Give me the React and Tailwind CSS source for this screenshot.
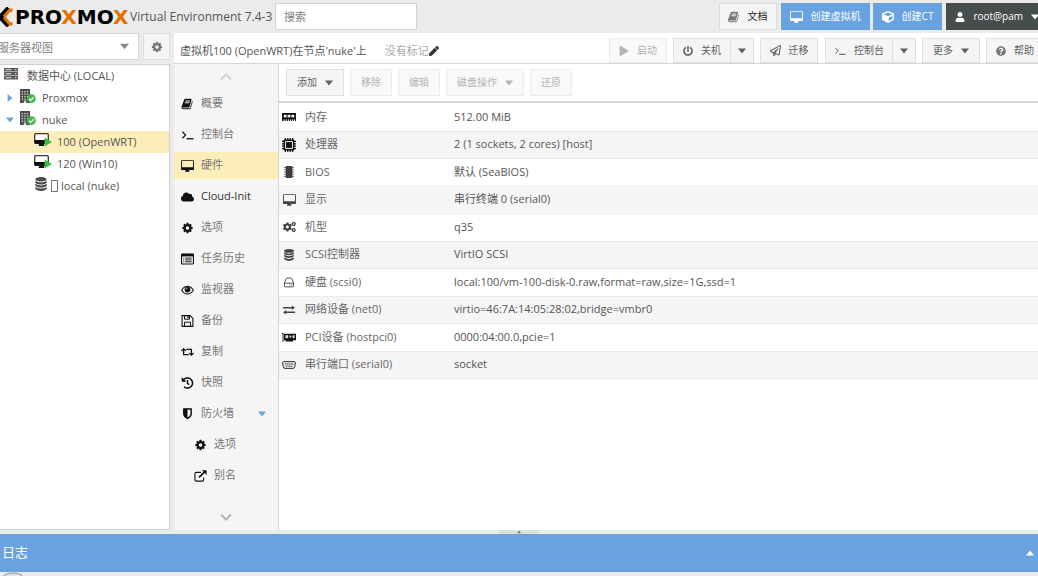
import { useState } from 'react';
import {
    FaCloud, FaCogs, FaCube, FaHistory, FaPen,
    FaPlay, FaPowerOff, FaQuestionCircle, FaRegPaperPlane, FaRetweet, FaUser,
} from 'react-icons/fa';

/* ---------- icons ---------- */

const BookIcon = ({ className }) => (
    <svg viewBox="0 0 1792 1792" fill="currentColor" className={className}>
        <path d="M1639 478q40 57 18 129l-275 906q-19 64-76.5 107.5t-122.5 43.5h-923q-77 0-148.5-53.5t-99.5-131.5q-24-67-2-127 0-4 3-27t4-37q1-8-3-21.5t-3-19.5q2-11 8-21t16.5-23.5 16.5-23.5q23-38 45-91.5t30-91.5q3-10 .5-30t-.5-28q3-11 17-28t17-23q21-36 42-92t25-90q1-9-2.5-32t.5-28q4-13 22-30.5t22-22.5q19-26 42.5-84.5t27.5-96.5q1-8-3-25.5t-2-26.5q2-8 9-18t18-23 17-21q8-12 16.5-30.5t15-35 16-36 19.5-32 26.5-23.5 36-11.5 47.5 5.5l-1 3q38-9 51-9h761q74 0 114 56t18 130l-274 906q-36 119-71.5 153.5t-128.5 34.5h-869q-27 0-38 15-11 16-1 43 24 70 144 70h923q29 0 56-15.5t35-41.5l300-987q7-22 5-57 38 15 59 43zm-1064 2q-4 13 2 22.5t20 9.5h608q13 0 25.5-9.5t16.5-22.5l21-64q4-13-2-22.5t-20-9.5h-608q-13 0-25.5 9.5t-16.5 22.5zm-83 256q-4 13 2 22.5t20 9.5h608q13 0 25.5-9.5t16.5-22.5l21-64q4-13-2-22.5t-20-9.5h-608q-13 0-25.5 9.5t-16.5 22.5z" />
    </svg>
);

const CogIcon = ({ className }) => (
    <svg viewBox="0 0 1792 1792" fill="currentColor" className={className}>
        <path d="M1152 896q0-106-75-181t-181-75-181 75-75 181 75 181 181 75 181-75 75-181zm512-109v222q0 12-8 23t-20 13l-185 28q-19 54-39 91 35 50 107 138 10 12 10 25t-9 23q-27 37-99 108t-94 71q-12 0-26-9l-138-108q-44 23-91 38-16 136-29 186-7 28-36 28h-222q-14 0-24.5-8.5t-11.5-21.5l-28-184q-49-16-90-37l-141 107q-10 9-25 9-14 0-25-11-126-114-165-168-7-10-7-23 0-12 8-23 15-21 51-66.5t54-70.5q-27-50-41-99l-183-27q-13-2-21-12.5t-8-23.5v-222q0-12 8-23t19-13l186-28q14-46 39-92-40-57-107-138-10-12-10-24 0-10 9-23 26-36 98.5-107.5t94.5-71.5q13 0 26 10l138 107q44-23 91-38 16-136 29-186 7-28 36-28h222q14 0 24.5 8.5t11.5 21.5l28 184q49 16 90 37l142-107q9-9 24-9 13 0 25 10 129 119 165 170 7 8 7 22 0 12-8 23-15 21-51 66.5t-54 70.5q26 50 41 98l183 28q13 2 21 12.5t8 23.5z" />
    </svg>
);

const DesktopIcon = ({ className }) => (
    <svg viewBox="0 0 1856 1664" fill="currentColor" className={className}>
        <path d="M1728 992v-832q0-13-9.5-22.5t-22.5-9.5h-1536q-13 0-22.5 9.5t-9.5 22.5v832q0 13 9.5 22.5t22.5 9.5h1536q13 0 22.5-9.5t9.5-22.5zm128-832v1088q0 66-47 113t-113 47h-544q0 37 16 77.5t32 71 16 43.5q0 26-19 45t-45 19h-512q-26 0-45-19t-19-45q0-14 16-44t32-70 16-78h-480q-66 0-113-47t-47-113v-1088q0-66 47-113t113-47h1536q66 0 113 47t47 113z" />
    </svg>
);

const TerminalIcon = ({ className }) => (
    <svg viewBox="0 0 14 12" fill="none" stroke="currentColor" className={className}>
        <path d="M1.5 2.5 5 6 1.5 9.5" strokeWidth="1.2" />
        <path d="M6 10h7.5" strokeWidth="1.4" />
    </svg>
);

const ListIcon = ({ className }) => (
    <svg viewBox="0 0 14 12" className={className}>
        <rect x="0.6" y="0.6" width="12.8" height="10.8" rx="1" fill="none" stroke="currentColor" strokeWidth="1.2" />
        <path d="M.5.5h13v2.7H.5z" fill="currentColor" />
        <path d="M2.5 5h1M2.500 7h1M2.500 9h1M4.500 5h7M4.500 7h7M4.500 9h7" stroke="currentColor" />
    </svg>
);

const EyeIcon = ({ className }) => (
    <svg viewBox="0 0 14 12" className={className}>
        <path d="M.7 6.200Q3.300 2 7 2t6.300 4.200Q10.700 10.300 7 10.300T.7 6.200z" fill="none" stroke="currentColor" strokeWidth="1.1" />
        <circle cx="7" cy="5.500" r="3.100" fill="currentColor" />
        <path d="M5.200 5.500Q5.300 3.900 7 3.800" fill="none" stroke="#f5f5f5" strokeWidth="0.8" />
    </svg>
);

const SaveIcon = ({ className }) => (
    <svg viewBox="0 0 12 12" fill="none" stroke="currentColor" className={className}>
        <path d="M.6.6h8l2.800 2.800v8H.6z" strokeWidth="1.100" />
        <path d="M3 11V7.200h6V11" />
        <path d="M3 .8v3.400h5V.8" />
        <path d="M6.600 1v2.300" strokeWidth="1.300" />
    </svg>
);

const ShieldIcon = ({ className }) => (
    <svg viewBox="0 0 12 14" className={className}>
        <path d="M1.700 1.200h8.600v5.600q0 3.200-4.300 5.400-4.300-2.200-4.300-5.400z" fill="none" stroke="currentColor" strokeWidth="1.700" />
        <path d="M1.500 1H6v11q-4.500-2-4.500-5.200z" fill="currentColor" />
    </svg>
);

const LinkOutIcon = ({ className }) => (
    <svg viewBox="0 0 14 13" fill="none" stroke="currentColor" className={className}>
        <path d="M7.500 2.600H2.400Q1 2.600 1 4v6.600Q1 12 2.400 12H9q1.400 0 1.400-1.400V8" strokeWidth="1.200" />
        <path d="M5.400 8 11.500 2" strokeWidth="1.800" />
        <path d="M8.600.3h5v5z" fill="currentColor" stroke="none" />
    </svg>
);

const ServerIcon = ({ className }) => (
    <svg viewBox="0 0 14 12" className={className}>
        {[0, 4, 8].map(y => (
            <g key={y}>
                <rect x="0" y={y} width="14" height="3.4" rx="0.5" fill="#5a5555" />
                <rect x="1.5" y={y + 1.2} width="6" height="1" fill="#e0e0e0" />
                <rect x="11" y={y + 1.2} width="1.4" height="1" fill="#fff" />
            </g>
        ))}
    </svg>
);

const NodeIcon = ({ className }) => (
    <svg viewBox="0 0 17 15" className={className}>
        <rect x="1" y="0" width="10" height="14" fill="#4a4a4a" />
        {[2, 4.5, 7, 9.5].map(y => [2.6, 5.2, 7.8].map(x => (
            <rect key={x + '-' + y} x={x} y={y} width="1.4" height="1.3" fill="#d5d5d5" />
        )))}
        <rect x="4.8" y="11.6" width="2.4" height="2.4" fill="#ddd" />
        <circle cx="12.4" cy="9.6" r="4.4" fill="#3dbb46" />
        <path d="M10.2 9.7 11.9 11.3 14.8 8.2" fill="none" stroke="#fff" strokeWidth="1.4" />
    </svg>
);

const VmIcon = ({ className }) => (
    <svg viewBox="0 0 18 14" className={className}>
        <rect x="0.7" y="0.7" width="13.6" height="9.6" rx="1" fill="#fff" stroke="#43303a" strokeWidth="1.3" />
        <path d="M0.5 7h14v2.7q0 1-1 1h-12q-1 0-1-1z" fill="#111" />
        <path d="M5.4 10h4.2l.9 3h-6z" fill="#111" />
        <path d="M10.6 4.6 18 9l-7.4 4.4z" fill="#3dbb46" />
    </svg>
);

const DatabaseIcon = ({ className }) => (
    <svg viewBox="0 0 12 14" fill="currentColor" className={className}>
        <ellipse cx="6" cy="2.2" rx="5.7" ry="2.2" />
        <path d="M.3 3.7q2.2 1.7 5.7 1.7t5.7-1.7v1.700q-1.200 2-5.700 2t-5.700-2z" />
        <path d="M.3 6.800q2.200 1.700 5.700 1.700t5.700-1.700v1.700q-1.200 2-5.700 2t-5.700-2z" />
        <path d="M.3 9.900q2.200 1.700 5.700 1.700t5.700-1.700v1.900q-1.200 2.100-5.700 2.100t-5.700-2.100z" />
    </svg>
);

const MemoryIcon = ({ className }) => (
    <svg viewBox="0 0 14 8" className={className}>
        <path d="M0 0h14v2.4q-.8.4 0 1.2V8H0V3.6q.8-.8 0-1.2z" fill="#111" />
        {[1.8, 5.6, 9.4].map(x => <rect key={x} x={x} y="1.8" width="2.8" height="2.6" fill="#eee" />)}
        {[1.5, 3.7, 5.9, 8.1, 10.3, 12].map(x => <rect key={x} x={x} y="6.4" width="1" height="1.6" fill="#fff" />)}
    </svg>
);

const CpuIcon = ({ className }) => (
    <svg viewBox="0 0 14 14" className={className}>
        <path d="M3.3 0v14M5.8 0v14M8.2 0v14M10.7 0v14M0 3.3h14M0 5.8h14M0 8.2h14M0 10.7h14" stroke="#111" strokeWidth="1.2" />
        <rect x="1.6" y="1.6" width="10.8" height="10.8" rx="1" fill="#111" />
        <rect x="3.6" y="3.6" width="6.8" height="6.8" fill="none" stroke="#fff" strokeWidth="0.9" />
    </svg>
);

const ChipIcon = ({ className }) => (
    <svg viewBox="0 0 12 14" className={className}>
        <path d="M1 2.5h10M1 4.7h10M1 7h10M1 9.3h10M1 11.5h10" stroke="#888" strokeWidth="1" />
        <rect x="2.6" y="1" width="6.8" height="12" rx="0.8" fill="#443c3c" />
    </svg>
);

const HddIcon = ({ className }) => (
    <svg viewBox="0 0 12 12" fill="none" stroke="currentColor" className={className}>
        <path d="M1 6.5 2.9 1.8q.2-.6.8-.6h4.6q.6 0 .8.6L11 6.5V10q0 .8-.8.8H1.8Q1 10.8 1 10zM1 6.7h10" />
        <path d="M6.5 8.8h1M8.8 8.8h1" strokeWidth="1.2" />
    </svg>
);

const ExchangeIcon = ({ className }) => (
    <svg viewBox="0 0 13 10" fill="currentColor" className={className}>
        <path d="M0 1.800h9.500V0L13 2.500 9.500 5V3.300H0z" />
        <path d="M13 8.200H3.500V10L0 7.500 3.500 5v1.700H13z" />
    </svg>
);

const PciIcon = ({ className }) => (
    <svg viewBox="0 0 14 9" className={className}>
        <path d="M0 0h1.5v9H.6V1H0z" fill="#111" />
        <path d="M2 .8h12v6.4H11v1.3H3.6V7.2H2z" fill="#111" />
        <rect x="3.4" y="2.2" width="2.8" height="3" fill="#ddd" />
        <circle cx="8.4" cy="3.6" r="1.1" fill="#ddd" />
        <rect x="10.6" y="2.2" width="2" height="3" fill="#ddd" />
    </svg>
);

const SerialIcon = ({ className }) => (
    <svg viewBox="0 0 14 8" className={className}>
        <path d="M1.8.6h10.4q1.3 0 1.2 1.3l-.6 3.8q-.3 1.700-1.800 1.700H3Q1.500 7.400 1.200 5.700L.6 1.900Q.5.6 1.800.6z" fill="#e8e8e8" stroke="#333" />
        <path d="M3 2.900h8.500" stroke="#333" strokeWidth="1.4" strokeDasharray="1 .8" />
        <path d="M3.800 5.200h6.800" stroke="#333" strokeWidth="1.3" strokeDasharray="1 .8" />
    </svg>
);

const LogoMark = ({ className }) => (
    <svg viewBox="0 0 14 20" fill="none" className={className}>
        <path d="M12.500 3.200H9.600L3.600 10l6 6.800h2.900" stroke="#e57000" strokeWidth="3.200" />
        <path d="M8 .5 0 9.500M8 19.500 0 10.500" stroke="#000" strokeWidth="3.200" />
        <path d="M-2 6 2 10l-4 4" stroke="#000" strokeWidth="3" />
    </svg>
);

const Chevron = ({ up }) => (
    <svg viewBox="0 0 12 7" fill="none" stroke={up ? '#d2d2d2' : '#b4b4b4'} strokeWidth="2" className="w-3 h-2">
        <path d={up ? 'M1 6 6 1l5 5' : 'M1 1l5 5 5-5'} />
    </svg>
);

const Arrow = ({ dir = 'down', className }) => {
    const paths = { down: 'M0 2h10L5 8z', right: 'M2 0v10l6-5z', up: 'M0 8h10L5 2z' };
    return (
        <svg viewBox="0 0 10 10" fill="currentColor" className={className}>
            <path d={paths[dir]} />
        </svg>
    );
};

/* ---------- data ---------- */

const navItems = [
    { id: 'summary', label: '概要', icon: BookIcon },
    { id: 'console', label: '控制台', icon: TerminalIcon },
    { id: 'hardware', label: '硬件', icon: DesktopIcon },
    { id: 'cloudinit', label: 'Cloud-Init', icon: FaCloud },
    { id: 'options', label: '选项', icon: CogIcon },
    { id: 'tasks', label: '任务历史', icon: ListIcon },
    { id: 'monitor', label: '监视器', icon: EyeIcon },
    { id: 'backup', label: '备份', icon: SaveIcon },
    { id: 'replication', label: '复制', icon: FaRetweet },
    { id: 'snapshot', label: '快照', icon: FaHistory },
    { id: 'firewall', label: '防火墙', icon: ShieldIcon, expandable: true },
    { id: 'fw-options', label: '选项', icon: CogIcon, nested: true },
    { id: 'fw-alias', label: '别名', icon: LinkOutIcon, nested: true },
];

const hardware = [
    { name: '内存', value: '512.00 MiB', icon: MemoryIcon, size: 'w-[14px] h-2' },
    { name: '处理器', value: '2 (1 sockets, 2 cores) [host]', icon: CpuIcon, size: 'w-[14px] h-[14px]' },
    { name: 'BIOS', value: '默认 (SeaBIOS)', icon: ChipIcon, size: 'w-3 h-[14px]' },
    { name: '显示', value: '串行终端 0 (serial0)', icon: DesktopIcon, size: 'w-[13px] h-3' },
    { name: '机型', value: 'q35', icon: FaCogs, size: 'w-[13px] h-3' },
    { name: 'SCSI控制器', value: 'VirtIO SCSI', icon: DatabaseIcon, size: 'w-3 h-3' },
    { name: '硬盘 (scsi0)', value: 'local:100/vm-100-disk-0.raw,format=raw,size=1G,ssd=1', icon: HddIcon, size: 'w-3 h-[11px]' },
    { name: '网络设备 (net0)', value: 'virtio=46:7A:14:05:28:02,bridge=vmbr0', icon: ExchangeIcon, size: 'w-3 h-[10px]' },
    { name: 'PCI设备 (hostpci0)', value: '0000:04:00.0,pcie=1', icon: PciIcon, size: 'w-[14px] h-[9px]' },
    { name: '串行端口 (serial0)', value: 'socket', icon: SerialIcon, size: 'w-[14px] h-2' },
];

/* ---------- parts ---------- */

const toolButton = 'flex items-center justify-center border border-[#e0e0e0] bg-[#f5f5f5] text-[10px] text-[#606060] whitespace-nowrap shrink-0 disabled:text-[#b4b4b4] disabled:border-[#ececec] disabled:bg-[#f9f9f9]';

const Header = () => (
    <header className="flex items-center h-[33px] shrink-0">
        <h1 className="flex items-center shrink-0 w-[275px]">
            <LogoMark className="w-[14px] h-5 shrink-0" />
            <span className="w-[116px] pl-px text-[20px] leading-5 font-bold text-black font-['DejaVu_Sans',sans-serif]">
                PRO<span className="text-[#e57000]">X</span>MO<span className="text-[#e57000]">X</span>
            </span>
            <span className="text-xs text-[#555] whitespace-nowrap">Virtual Environment 7.4-3</span>
        </h1>
        <input type="text" aria-label="搜索" placeholder="搜索" className="w-[142px] h-[27px] px-2 border border-[#d5d5d5] bg-white text-[11px] placeholder:text-[#808080] outline-none" />
        <div className="flex ml-auto -mr-[10px] h-[27px]">
            <button type="button" className="flex items-center gap-2 px-2 mr-1 border border-[#dcdcdc] bg-[#f5f5f5] text-[10px] text-[#222] whitespace-nowrap">
                <BookIcon className="w-3 h-3 text-[#777]" />文档
            </button>
            <button type="button" className="flex items-center gap-2 px-[9px] mr-[3px] bg-[#68a2e0] text-[10px] text-white whitespace-nowrap">
                <DesktopIcon className="w-[13px] h-3" />创建虚拟机
            </button>
            <button type="button" className="flex items-center gap-2 px-[9px] mr-1 bg-[#68a2e0] text-[10px] text-white whitespace-nowrap">
                <FaCube className="w-3 h-3" />创建CT
            </button>
            <button type="button" className="flex items-center gap-2 px-[9px] bg-[#464d4d] text-[10px] text-white whitespace-nowrap">
                <FaUser className="w-[10px] h-[10px]" />root@pam<Arrow className="w-2 h-2" />
            </button>
        </div>
    </header>
);

const treeRow = 'flex items-center h-[22px] text-[11px] text-[#555] whitespace-nowrap';

const ResourceTree = () => (
    <aside className="flex flex-col w-[170px] shrink-0">
        <div className="flex justify-between h-[27px] mb-1">
            <div className="relative w-[139px] overflow-hidden border border-l-0 border-[#d5d5d5] bg-white">
                <select aria-label="视图" className="appearance-none w-full h-full -ml-[2px] text-[11px] text-[#808080] outline-none">
                    <option>服务器视图</option>
                </select>
                <Arrow className="absolute right-[9px] top-2 w-[9px] h-[9px] text-[#8a8a8a] pointer-events-none" />
            </div>
            <button type="button" aria-label="设置" className="flex items-center justify-center w-[27px] border border-[#e0e0e0] bg-[#f5f5f5] text-[#777]">
                <CogIcon className="w-3 h-3" />
            </button>
        </div>
        <ul className="flex-1 min-h-0 border border-l-0 border-[#d0d0d0] bg-white">
            <li className={treeRow}>
                <ServerIcon className="w-[14px] h-3 ml-1 mr-[9px] mb-1" />数据中心 (LOCAL)
            </li>
            <li className={treeRow}>
                <Arrow dir="right" className="w-2 h-2 ml-[6px] mr-[5px] text-[#68a2e0]" />
                <NodeIcon className="w-[17px] h-[15px] mb-1 mr-[6px]" />Proxmox
            </li>
            <li className={treeRow}>
                <Arrow className="w-2 h-2 ml-[6px] mr-[5px] text-[#68a2e0]" />
                <NodeIcon className="w-[17px] h-[15px] mb-1 mr-[6px]" />nuke
            </li>
            <li className={treeRow + ' bg-[#fceeb8]'}>
                <VmIcon className="w-[18px] h-[14px] ml-[34px] mr-[5px] mb-1" />100 (OpenWRT)
            </li>
            <li className={treeRow}>
                <VmIcon className="w-[18px] h-[14px] ml-[34px] mr-[5px] mb-1" />120 (Win10)
            </li>
            <li className={treeRow}>
                <DatabaseIcon className="w-3 h-[14px] ml-[35px] mr-1 mb-1 text-[#4a4a4a]" />
                <span className="w-[7px] h-3 mr-[3px] border border-[#777]" />local (nuke)
            </li>
        </ul>
    </aside>
);

const PanelHeader = () => (
    <div className="flex items-end h-[31px] shrink-0 bg-white border-b border-[#d5d5d5] overflow-hidden">
        <h2 className="self-center pl-[6px] pt-[6px] text-[11px] text-[#555] whitespace-nowrap">虚拟机100 (OpenWRT)在节点'nuke'上</h2>
        <div className="self-center flex items-center pl-[18px] pt-[6px] text-[11px] text-[#a8a8a8] whitespace-nowrap">
            没有标记
            <button type="button" aria-label="编辑标记" className="text-[#333]"><FaPen className="w-[10px] h-[10px]" /></button>
        </div>
        <div className="flex ml-auto -mr-[6px] h-[25px]">
            <button type="button" disabled className={toolButton + ' w-[58px] gap-2 mr-[6px]'}><FaPlay className="w-[10px] h-[10px]" />启动</button>
            <button type="button" className={toolButton + ' w-[58px] gap-2'}><FaPowerOff className="w-[10px] h-[10px]" />关机</button>
            <button type="button" aria-label="关机选项" className={toolButton + ' w-6 mr-[6px] -ml-px'}><Arrow className="w-2 h-2" /></button>
            <button type="button" className={toolButton + ' w-[58px] gap-2 mr-[7px]'}><FaRegPaperPlane className="w-[11px] h-[11px]" />迁移</button>
            <button type="button" className={toolButton + ' w-[68px] gap-2'}><TerminalIcon className="w-3 h-[10px]" />控制台</button>
            <button type="button" aria-label="控制台选项" className={toolButton + ' w-6 mr-[6px] -ml-px'}><Arrow className="w-2 h-2" /></button>
            <button type="button" className={toolButton + ' w-[58px] gap-2 mr-[6px]'}>更多<Arrow className="w-2 h-2" /></button>
            <button type="button" className={toolButton + ' w-[58px] gap-2'}><FaQuestionCircle className="w-[10px] h-[10px] text-[#777]" />帮助</button>
        </div>
    </div>
);

const SideNav = ({ active, onSelect }) => (
    <nav className="flex flex-col w-[105px] shrink-0 bg-[#f5f5f5] border-r border-[#d5d5d5]">
        <button type="button" aria-label="向上滚动" className="flex items-center justify-center h-[26px] shrink-0"><Chevron up /></button>
        <ul className="flex flex-col gap-1">
            {navItems.map(item => {
                const Icon = item.icon;
                const on = item.id === active;
                return (
                    <li key={item.id}>
                        <a
                            href={'#' + item.id}
                            onClick={() => onSelect(item.id)}
                            className={`flex items-center gap-[7px] h-[27px] pr-3 text-[11px] whitespace-nowrap ${item.nested ? 'pl-5' : 'pl-[7px]'} ${on ? 'bg-[#fceeb8]' : ''} ${item.id === 'cloudinit' ? 'text-[#333]' : 'text-[#777]'}`}
                        >
                            <Icon className="w-[13px] h-3 shrink-0 text-[#111]" />
                            {item.label}
                            {item.expandable && <Arrow className="w-2 h-2 ml-auto text-[#68a2e0]" />}
                        </a>
                    </li>
                );
            })}
        </ul>
        <button type="button" aria-label="向下滚动" className="flex items-center justify-center h-[26px] shrink-0 mt-auto"><Chevron /></button>
    </nav>
);

const HardwareView = () => (
    <section className="flex-1 min-w-0 bg-white">
        <div className="flex items-center gap-[6px] h-[39px] pl-[7px] border-b-2 border-[#d5d5d5]">
            <button type="button" className={toolButton + ' h-[27px] px-[10px] gap-2'}>添加<Arrow className="w-2 h-2" /></button>
            <button type="button" disabled className={toolButton + ' h-[27px] px-[10px]'}>移除</button>
            <button type="button" disabled className={toolButton + ' h-[27px] px-[10px]'}>编辑</button>
            <button type="button" disabled className={toolButton + ' h-[27px] px-[10px] gap-2'}>磁盘操作<Arrow className="w-2 h-2" /></button>
            <button type="button" disabled className={toolButton + ' h-[27px] px-[10px]'}>还原</button>
        </div>
        <table className="w-full table-fixed border-collapse text-left text-[11px] text-[#555]">
            <tbody>
                {hardware.map(({ name, value, icon: Icon, size }) => (
                    <tr key={name} className="h-7 even:h-[27px] border-b border-[#ebebeb] even:bg-[#f5f5f5]">
                        <th scope="row" className="w-[175px] p-0 pl-[3px] font-normal text-[#666]">
                            <span className="flex items-center">
                                <span className="flex justify-center w-[14px] mr-[9px] text-[#444]"><Icon className={size} /></span>
                                {name}
                            </span>
                        </th>
                        <td className="p-0">{value}</td>
                    </tr>
                ))}
            </tbody>
        </table>
    </section>
);

const App = () => {
    const [active, setActive] = useState('hardware');

    return (
        <div className="flex flex-col h-screen overflow-hidden bg-[#ebebeb] font-['Open_Sans','Noto_Sans_CJK_SC',sans-serif]">
            <Header />
            <main className="flex flex-1 min-h-0 gap-1">
                <ResourceTree />
                <div className="flex flex-col flex-1 min-w-0">
                    <PanelHeader />
                    <div className="flex flex-1 min-h-0">
                        <SideNav active={active} onSelect={setActive} />
                        <HardwareView />
                    </div>
                </div>
            </main>
            <div className="flex justify-center h-1 shrink-0">
                <div className="flex justify-center w-10 bg-[#dedede]"><Arrow dir="up" className="w-1 h-1 text-[#777]" /></div>
            </div>
            <footer className="shrink-0">
                <div className="flex items-center justify-between h-[38px] pl-[2px] pr-1 bg-[#68a2e0] text-white">
                    <h2 className="text-[13px]">日志</h2>
                    <button type="button" aria-label="展开日志"><Arrow dir="up" className="w-2 h-2" /></button>
                </div>
                <div className="h-1 overflow-hidden">
                    <svg viewBox="0 0 24 12" fill="#dde3e8" stroke="#8a98a3" className="w-6 h-3 ml-px">
                        <ellipse cx="12" cy="7" rx="11" ry="6" />
                    </svg>
                </div>
            </footer>
        </div>
    );
};

export default App;
